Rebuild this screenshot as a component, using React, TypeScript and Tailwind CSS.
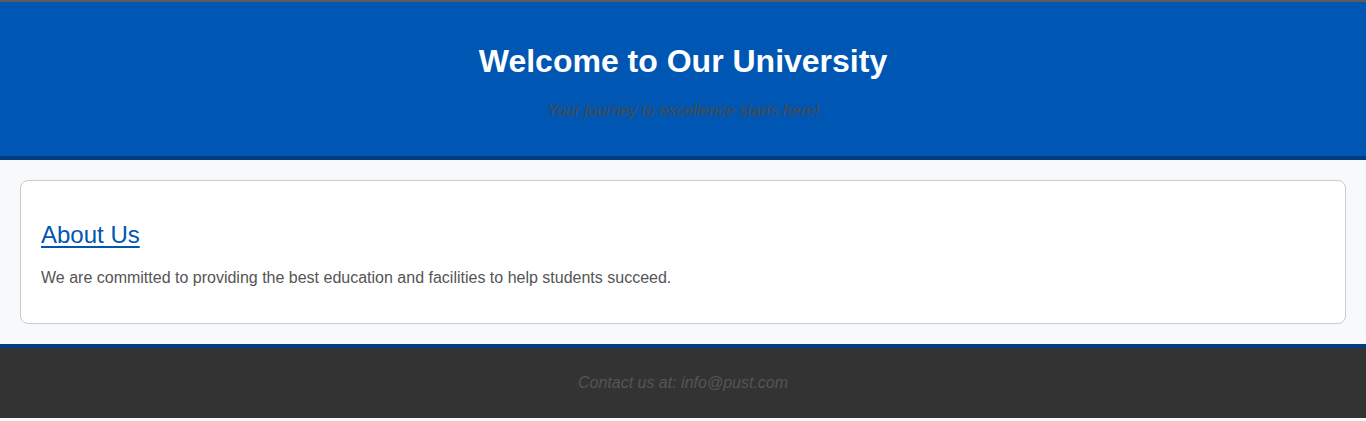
export default function App() {
  return (
    <div className="min-h-screen bg-[#f8f9fa] font-['Liberation_Sans',Arial,sans-serif]">
      <header className="border-t-2 border-b-4 border-t-[#5c5c5c] border-b-[#003d80] bg-[#0056b3] p-5 text-center">
        <h1 className="my-[21.44px] text-[32px] font-bold leading-[37px] text-white">
          Welcome to Our University
        </h1>
        <p className="my-4 text-base italic leading-[18.4px] text-[#4a4a4a]">
          Your journey to excellence starts here!
        </p>
      </header>

      <main className="p-5">
        <section className="rounded-lg border border-[#ccc] bg-white p-5">
          <h2 className="my-[19.92px] text-2xl font-normal leading-[27.6px] text-[#0056b3] underline underline-offset-[3px]">
            About Us
          </h2>
          <p className="my-4 text-base leading-[18.4px] text-[#555]">
            We are committed to providing the best education and facilities to help students succeed.
          </p>
        </section>
      </main>

      <footer className="border-t-4 border-[#003d80] bg-[#333] px-5 py-[10px] text-center">
        <p className="my-4 text-base italic leading-[18px] text-[#555]">
          Contact us at: info@pust.com
        </p>
      </footer>
    </div>
  );
}
